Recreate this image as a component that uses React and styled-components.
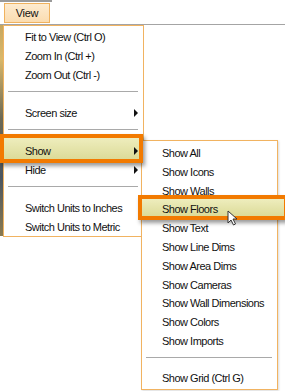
import React from "react";
import styled, { createGlobalStyle } from "styled-components";

const GlobalStyle = createGlobalStyle`
  body {
    margin: 0;
    background: #fff;
    font-family: "Liberation Sans", Arial, sans-serif;
  }
`;

const mainItems = [
  { label: "Fit to View (Ctrl O)" },
  { label: "Zoom In (Ctrl +)" },
  { label: "Zoom Out (Ctrl -)" },
  { sep: true },
  { label: "Screen size", arrow: true },
  { sep: true },
  { label: "Show", arrow: true, active: true, sub: true },
  { label: "Hide", arrow: true },
  { sep: true },
  { label: "Switch Units to Inches" },
  { label: "Switch Units to Metric" },
];

const subItems = [
  { label: "Show All" },
  { label: "Show Icons" },
  { label: "Show Walls" },
  { label: "Show Floors", active: true },
  { label: "Show Text" },
  { label: "Show Line Dims" },
  { label: "Show Area Dims" },
  { label: "Show Cameras" },
  { label: "Show Wall Dimensions" },
  { label: "Show Colors" },
  { label: "Show Imports" },
  { sep: true },
  { label: "Show Grid (Ctrl G)" },
];

const Cursor = () => (
  <CursorBox>
    <svg width="12" height="17" viewBox="0 0 12 17">
      <path
        d="M1 1 L1 13 L4 10 L6.5 15 L8.5 14 L6 9 L10 9 Z"
        fill="#fff"
        stroke="#333"
        strokeWidth="1"
        strokeLinejoin="round"
      />
    </svg>
  </CursorBox>
);

const SubMenu = () => (
  <SubPanel>
    {subItems.map((item, i) =>
      item.sep ? (
        <Separator key={i} $h={18.2}>
          <SepLine />
        </Separator>
      ) : (
        <Item key={i} $h={18.8} $pad={20}>
          {item.active && <Frame $top={-5} $left={-4} $w={150} $h={25} />}
          <Label>{item.label}</Label>
        </Item>
      )
    )}
  </SubPanel>
);

const App = () => {
  return (
    <Page>
      <GlobalStyle />
      <TopBar>
        <ViewButton>View</ViewButton>
      </TopBar>
      <Menu>
        {mainItems.map((item, i) =>
          item.sep ? (
            <Separator key={i} $h={19}>
              <SepLine />
            </Separator>
          ) : (
            <Item key={i} $h={19} $pad={21}>
              {item.active && <Frame $top={-7} $left={-4} $w={143} $h={29} />}
              <Label>{item.label}</Label>
              {item.arrow && <Arrow />}
              {item.sub && <SubMenu />}
            </Item>
          )
        )}
      </Menu>
      <Cursor />
    </Page>
  );
};

export default App;

const Page = styled.div`
  position: relative;
  width: 285px;
  height: 391px;
  overflow: hidden;
  background: linear-gradient(
      to bottom,
      #b89a58 0%,
      #d9b86a 25%,
      #6d6a55 50%,
      #4a5560 75%,
      #8a7a50 100%
    )
    0 0 / 3px 236px no-repeat,
    #fff;
`;

const TopBar = styled.div`
  height: 25px;
  box-sizing: border-box;
  padding: 3px 0 0 4px;
  border-bottom: 1px solid #a4a4a4;
  background: linear-gradient(#9a9a9a, #9a9a9a) 0 0 / 52px 2px no-repeat,
    #fff;
  display: flex;
  align-items: flex-start;
`;

const ViewButton = styled.div`
  width: 46px;
  height: 20px;
  box-sizing: border-box;
  border: 1px solid #f0b25e;
  background: linear-gradient(#fdebd0, #fbdcb0);
  font-size: 11px;
  letter-spacing: -0.3px;
  color: #111;
  display: flex;
  align-items: center;
  justify-content: center;
`;

const Menu = styled.div`
  position: absolute;
  top: 25px;
  left: 3px;
  width: 141px;
  height: 212px;
  box-sizing: border-box;
  border: 1px solid #f1b361;
  background: #fff;
  padding-top: 1px;
  z-index: 1;
`;

const SubPanel = styled.div`
  position: absolute;
  top: -1px;
  left: 137px;
  width: 137px;
  box-sizing: border-box;
  border: 1px solid #f1b361;
  background: #fff;
  padding: 2.6px 0 1.6px;
  box-shadow: 1px 1px 2px rgba(0, 0, 0, 0.15);
  z-index: 1;
`;

const Item = styled.div`
  position: relative;
  height: ${(p) => p.$h}px;
  display: flex;
  align-items: center;
  padding-left: ${(p) => p.$pad}px;
  font-size: 11px;
  letter-spacing: -0.5px;
  color: #111;
  white-space: nowrap;
`;

const Label = styled.span`
  position: relative;
  z-index: 3;
`;

const Frame = styled.div`
  position: absolute;
  top: ${(p) => p.$top}px;
  left: ${(p) => p.$left}px;
  width: ${(p) => p.$w}px;
  height: ${(p) => p.$h}px;
  box-sizing: border-box;
  border: 4px solid #f27a00;
  background: linear-gradient(#eeedbd, #dcdb98);
  box-shadow: 2px 3px 4px rgba(0, 0, 0, 0.4);
  z-index: 2;
`;

const Arrow = styled.span`
  position: absolute;
  right: 5px;
  top: 50%;
  margin-top: -4px;
  width: 0;
  height: 0;
  border-left: 4px solid #111;
  border-top: 4px solid transparent;
  border-bottom: 4px solid transparent;
  z-index: 3;
`;

const Separator = styled.div`
  height: ${(p) => p.$h}px;
  box-sizing: border-box;
  padding: 7px 5px 0 4px;
`;

const SepLine = styled.div`
  border-top: 1px solid #a9a9a9;
  border-bottom: 1px solid #fff;
`;

const CursorBox = styled.div`
  position: absolute;
  left: 227px;
  top: 210px;
  width: 12px;
  height: 17px;
  z-index: 10;
`;
